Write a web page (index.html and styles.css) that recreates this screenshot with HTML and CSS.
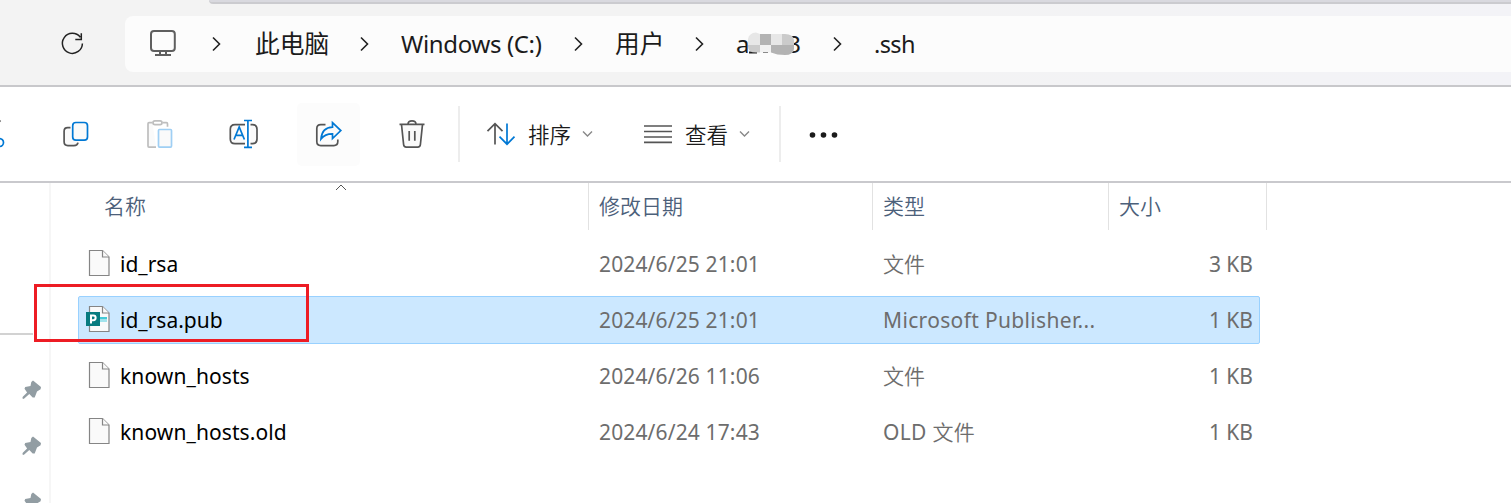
FILE: index.html
```
<!DOCTYPE html>
<html lang="zh-CN">
<head>
<meta charset="utf-8">
<title>.ssh</title>
<link rel="stylesheet" href="styles.css">
</head>
<body>
<div class="window">
  <header class="nav">
    <div class="tab-edge"></div>
    <div class="nav-row">
      <div class="refresh"><svg width="26" height="28" viewBox="60 31 26 28"><path d="M80.3 38.2A10 10 0 1 0 82.400 44.500M81.300 34.300v6.100h-6"/></svg></div>
      <nav class="address">
        <svg class="monitor" width="28" height="28" viewBox="149 29 28 28"><rect x="151" y="31" width="23.800" height="20" rx="3"/><path d="M160 51v4M166 51v4M155 55h16"/></svg>
        <svg class="chev" width="12" height="18" viewBox="0 0 12 18"><path d="M1 2.500l6.500 6.500-6.500 6.500"/></svg>
        <span class="crumb cjk">此电脑</span>
        <svg class="chev back" width="12" height="18" viewBox="0 0 12 18"><path d="M1 2.500l6.500 6.500-6.500 6.500"/></svg>
        <span class="crumb drive">Windows (C:)</span>
        <svg class="chev" width="12" height="18" viewBox="0 0 12 18"><path d="M1 2.500l6.500 6.500-6.500 6.500"/></svg>
        <span class="crumb cjk">用户</span>
        <svg class="chev" width="12" height="18" viewBox="0 0 12 18"><path d="M1 2.500l6.500 6.500-6.500 6.500"/></svg>
        <span class="crumb user"><span>a</span><span>3</span>
          <svg class="mosaic" width="54" height="28" viewBox="747 29 54 28">
            <defs><clipPath id="blob"><path d="M748 38q1-6 8-6.500l4 1.500h25q8 0 9 6v9q-1 6-9 6-8 0-14-2.500h-15q-8 0-8-6z"/></clipPath></defs>
            <path d="M749 51.500h8M763 51h5" stroke="#222" stroke-width="2"/>
            <g clip-path="url(#blob)"><path fill="#e7e7e7" d="M747 30h13v14h-13zM771 30h11v14h-11z"/><path fill="#b3b3b3" d="M760 33h11v11h-11zM771 44h24v12h-24z"/><path fill="#cbcbcb" d="M782 30h13v14h-13zM747 44h13v12h-13z"/><path fill="#f2f2f2" d="M760 44h11v12h-11z"/></g>
          </svg>
        </span>
        <svg class="chev" width="12" height="18" viewBox="0 0 12 18"><path d="M1 2.500l6.500 6.500-6.500 6.500"/></svg>
        <span class="crumb ssh">.ssh</span>
      </nav>
    </div>
  </header>

  <div class="toolbar">
    <div class="cut"><svg width="8" height="32" viewBox="0 118 8 32"><path class="gray" d="M-1 122l1.500-1.500"/><circle class="blue" cx="-.500" cy="142.500" r="4"/></svg></div>
    <div class="tool"><svg width="32" height="32" viewBox="60.500 118 32 32"><path class="gray" fill="#fafafa" d="M71 127.600h-2.800q-3.600 0-3.600 3.600v10.600q0 3.800 3.800 3.800h6q3.600 0 4.100-3"/><rect class="blue" fill="#fafafa" x="73.200" y="122.500" width="14.800" height="17.600" rx="3.200"/></svg></div>
    <div class="tool"><svg width="32" height="32" viewBox="144.500 118 32 32"><path class="pale" fill="#fafafa" d="M153 122.700h-3.500q-1 0-1 1v22.400q0 1 1 1h7"/><path class="pale" d="M163 122.700h4q1 0 1 1v3"/><rect class="pale" x="153.500" y="120.800" width="9" height="3.800" rx="1.900"/><rect class="paleblue" x="159" y="129.500" width="13" height="17.600" rx="1"/></svg></div>
    <div class="tool"><svg width="32" height="32" viewBox="228.500 118 32 32"><path class="gray" fill="#fafafa" d="M245.500 124.600h-10q-4.700 0-4.700 4.700v9.700q0 4.700 4.700 4.700h10M251 124.600h2q4.500 0 4.500 4.700v9.700q0 4.700-4.500 4.700h-2"/><path class="blue" d="M234.500 139.500l5.200-12.500 5.200 12.500M236.300 135.400h6.800M248.400 121v26M244.500 120.500h8M244.500 147.300h8"/></svg></div>
    <div class="tool"><div class="share"><svg width="32" height="32" viewBox="312 118 32 32"><path class="gray" d="M325.500 124.600h-4.700q-4 0-4 4v13q0 4 4 4h13q4 0 4-4v-2"/><path class="blue" fill="#fafafa" d="M332.500 122.700l8.300 7.900-8.300 8v-4.700q-7.500-.1-11.500 5 1-11.300 11.500-11.700z"/></svg></div></div>
    <div class="tool"><svg width="32" height="32" viewBox="396 118 32 32"><path class="gray" fill="#fafafa" d="M401.500 124.500l2.100 20q.2 2.600 2.700 2.600h11.400q2.500 0 2.700-2.600l2.100-20"/><path class="gray" d="M399.500 124.400h25M408 124q.2-3.200 4-3.200t4 3.200M409.200 131v9.800M414.800 131v9.800"/></svg></div>
    <i class="divider first"></i>
    <div class="menu sort">
      <svg width="30" height="26" viewBox="486 121 30 26"><path class="gray" d="M495 144.500v-20.500M487.500 131.200l7.500-7.500 7.500 7.500"/><path class="blue" d="M507 123.500v20.500M499.500 136.700l7.500 7.500 7.500-7.500"/></svg>
      <span>排序</span>
      <svg class="down" width="11" height="8" viewBox="0 0 11 8"><path d="M1 1.500l4.500 4.500 4.500-4.500"/></svg>
    </div>
    <div class="menu view">
      <svg width="30" height="26" viewBox="643 121 30 26"><path class="lines" d="M644 126h28M644 131.500h28M644 137h28M644 142.300h28"/></svg>
      <span>查看</span>
      <svg class="down" width="11" height="8" viewBox="0 0 11 8"><path d="M1 1.500l4.500 4.500 4.500-4.500"/></svg>
    </div>
    <i class="divider"></i>
    <svg class="more" width="30" height="8" viewBox="0 0 30 8"><circle cx="3.500" cy="4" r="2.800"/><circle cx="14.500" cy="4" r="2.800"/><circle cx="25.500" cy="4" r="2.800"/></svg>
  </div>

  <main class="content">
    <aside class="side">
      <div class="side-line"></div>
      <svg class="pin" width="20" height="20" viewBox="0 0 20 20"><path d="M11 .5l8 6.500-.4 2.200-3.600 2.200-2.300 6-2 .2-3.400-3.600-5.600 5-1.400-.7.500-1.600 4.300-4.300-2.600-3.700.7-1.600L8.500 6l.8-4z"/></svg>
      <svg class="pin" width="20" height="20" viewBox="0 0 20 20"><path d="M11 .5l8 6.500-.4 2.200-3.600 2.200-2.300 6-2 .2-3.400-3.600-5.600 5-1.400-.7.500-1.600 4.300-4.300-2.600-3.700.7-1.600L8.500 6l.8-4z"/></svg>
      <svg class="pin" width="20" height="20" viewBox="0 0 20 20"><path d="M11 .5l8 6.500-.4 2.200-3.600 2.200-2.300 6-2 .2-3.400-3.600-5.600 5-1.400-.7.500-1.600 4.300-4.300-2.600-3.700.7-1.600L8.500 6l.8-4z"/></svg>
    </aside>
    <section class="files">
      <div class="head">
        <div class="h-name">名称<svg class="sorted" width="12" height="7" viewBox="0 0 12 7"><path d="M1 6l5-5 5 5"/></svg></div>
        <div>修改日期</div><div>类型</div><div>大小</div>
      </div>
      <div class="row">
        <svg class="doc" width="34" height="30" viewBox="86 249 34 30"><path d="M89.500 250.500h13l6.500 6.500v18.500h-19.500z"/><path d="M102.500 250.500v6.500h6.500"/></svg>
        <span class="name n1">id_rsa</span><span class="date">2024/6/25 21:01</span><span class="thin">文件</span><span class="size">3 KB</span>
      </div>
      <div class="row selected">
        <svg class="doc" width="34" height="30" viewBox="86 305 34 30"><path d="M89.500 306.500h13l6.500 6.500v18.500h-19.500z"/><path d="M102.500 306.500v6.500h6.500"/><path class="cyan" d="M100 317h7v2.500h-7z"/><path class="cyan2" d="M100 319.500h7v2.500h-7z"/><rect class="pub" x="86" y="312" width="14" height="14"/><path class="letter" d="M91 323.500v-8h2.300a2.300 2.300 0 0 1 0 4.700H91"/></svg>
        <span class="name n2">id_rsa.pub</span><span class="date">2024/6/25 21:01</span><span class="kind">Microsoft Publisher...</span><span class="size">1 KB</span>
      </div>
      <div class="row">
        <svg class="doc" width="34" height="30" viewBox="86 249 34 30"><path d="M89.500 250.500h13l6.500 6.500v18.500h-19.500z"/><path d="M102.500 250.500v6.500h6.500"/></svg>
        <span class="name n3">known_hosts</span><span class="date">2024/6/26 11:06</span><span class="thin">文件</span><span class="size">1 KB</span>
      </div>
      <div class="row">
        <svg class="doc" width="34" height="30" viewBox="86 249 34 30"><path d="M89.500 250.500h13l6.500 6.500v18.500h-19.500z"/><path d="M102.500 250.500v6.500h6.500"/></svg>
        <span class="name n4">known_hosts.old</span><span class="date">2024/6/24 17:43</span><span class="old">OLD <span class="thin">文件</span></span><span class="size">1 KB</span>
      </div>
    </section>
  </main>
  <div class="highlight"></div>
</div>
</body>
</html>
```
FILE: styles.css
```
* { box-sizing: border-box; }
body { margin: 0; background: #fff; font-family: "Noto Sans", "Noto Sans CJK SC", sans-serif; font-size: 21px; }
.window { position: relative; width: 1511px; height: 503px; overflow: hidden; }
svg { display: block; fill: none; flex: none; }

.nav { height: 87px; background: linear-gradient(90deg, #f3f3f3 50%, #f3f3f7); border-bottom: 2px solid #c8c8cb; }
.tab-edge { height: 4px; margin-left: 209px; background: #d9d9df; border-bottom: 2px solid #cbcbcf; border-bottom-left-radius: 4px; }
.nav-row { display: grid; grid-template-columns: 125px 1fr; padding-top: 12px; }
.refresh { display: flex; align-items: center; padding-left: 60px; }
.refresh svg { stroke: #222; stroke-width: 1.500; }
.address { display: grid; grid-template-columns: 63px 43px 106px 40px 173px 41px 80px 41px 97px 41px auto; align-items: center; height: 56px; padding-left: 24px; background: #fcfcfc; border-radius: 8px 0 0 8px; white-space: nowrap; }
.monitor { stroke: #5f5f5f; stroke-width: 2; margin-bottom: 3px; }
.chev { stroke: #222; stroke-width: 1.600; }
.back { margin-left: -1px; }
.crumb { font-size: 24px; line-height: 32px; color: #1b1b1b; margin-top: -1px; }
.drive { letter-spacing: -.35px; }
.ssh { font-size: 23.500px; letter-spacing: -.6px; }
.cjk { font-size: 24.700px; }
.user { position: relative; display: flex; justify-content: space-between; width: 65px; }
.mosaic { position: absolute; left: 11px; top: 2px; }

.toolbar { display: flex; align-items: center; height: 96px; border-bottom: 2px solid #c9c9cd; color: #1b1b1b; }
.toolbar svg { stroke-width: 1.700; }
.cut { width: 34px; }
.tool { width: 84px; display: flex; justify-content: center; }
.share { width: 63px; height: 63px; display: flex; justify-content: center; align-items: center; background: #fcfcfc; border-radius: 5px; }
.gray { stroke: #555; }
.blue { stroke: #0078d4; }
.pale { stroke: #bebebe; }
.paleblue { stroke: #9fcff4; fill: #fafafa; }
.divider { width: 2px; height: 56px; background: #ededed; }
.divider.first { margin-left: 4px; }
.menu { display: flex; align-items: center; }
.menu span { width: 54px; margin-left: 12px; padding-top: 2px; line-height: 32px; font-size: 21.500px; font-weight: 350; }
.sort { margin-left: 26px; width: 157px; }
.view { width: 136px; }
.down { stroke: #888; }
.toolbar .down { stroke-width: 1.400; }
.lines { stroke: #555; }
.more { margin: 1px 0 0 28px; fill: #1b1b1b; }

.content { display: grid; grid-template-columns: 51px 1fr; height: 320px; }
.side { height: 320px; overflow: hidden; border-right: 2px solid #f6f6f6; }
.side-line { margin-top: 150px; height: 2px; width: 33px; margin-bottom: -1px; background: #d2d2d2; }
.pin { margin: 46px 0 -10px 22px; fill: #929da3; }
.head { display: grid; grid-template-columns: 538px 284px 236px 158px; height: 47px; color: #4c607a; line-height: 47px; font-weight: 350; }
.head div { padding-left: 10px; border-right: 1px solid #e2e2e2; }
.head .h-name { position: relative; padding-left: 53px; }
.sorted { position: absolute; left: 284px; top: 1px; stroke: #555; }
.row { display: grid; grid-template-columns: 34px 479px 284px 226px 144px; align-items: center; height: 48px; width: 1182px; margin: 0 0 8px 27px; padding-left: 7px; border: 1px solid transparent; color: #6d6d6d; line-height: 30px; white-space: nowrap; }
.head + .row { margin-top: 10px; }
.selected { background: #cce8ff; border-color: #99d1ff; border-radius: 2px; }
.doc { stroke: #858585; fill: #fafafa; stroke-width: 1.200; }
.cyan { fill: #45c9d6; stroke: none; }
.cyan2 { fill: #a2e3ec; stroke: none; }
.pub { fill: #077b7f; stroke: none; }
.letter { stroke: #fff; stroke-width: 2; fill: none; }
.thin { font-weight: 350; }
.name { color: #000; }
.n3, .n4 { letter-spacing: .1px; }
.date { letter-spacing: .14px; }
.kind { letter-spacing: .34px; }
.old { letter-spacing: .3px; }
.size { text-align: right; }
.highlight { position: absolute; left: 34px; top: 284px; width: 275px; height: 58px; border: 3px solid #ed1c24; }
```
